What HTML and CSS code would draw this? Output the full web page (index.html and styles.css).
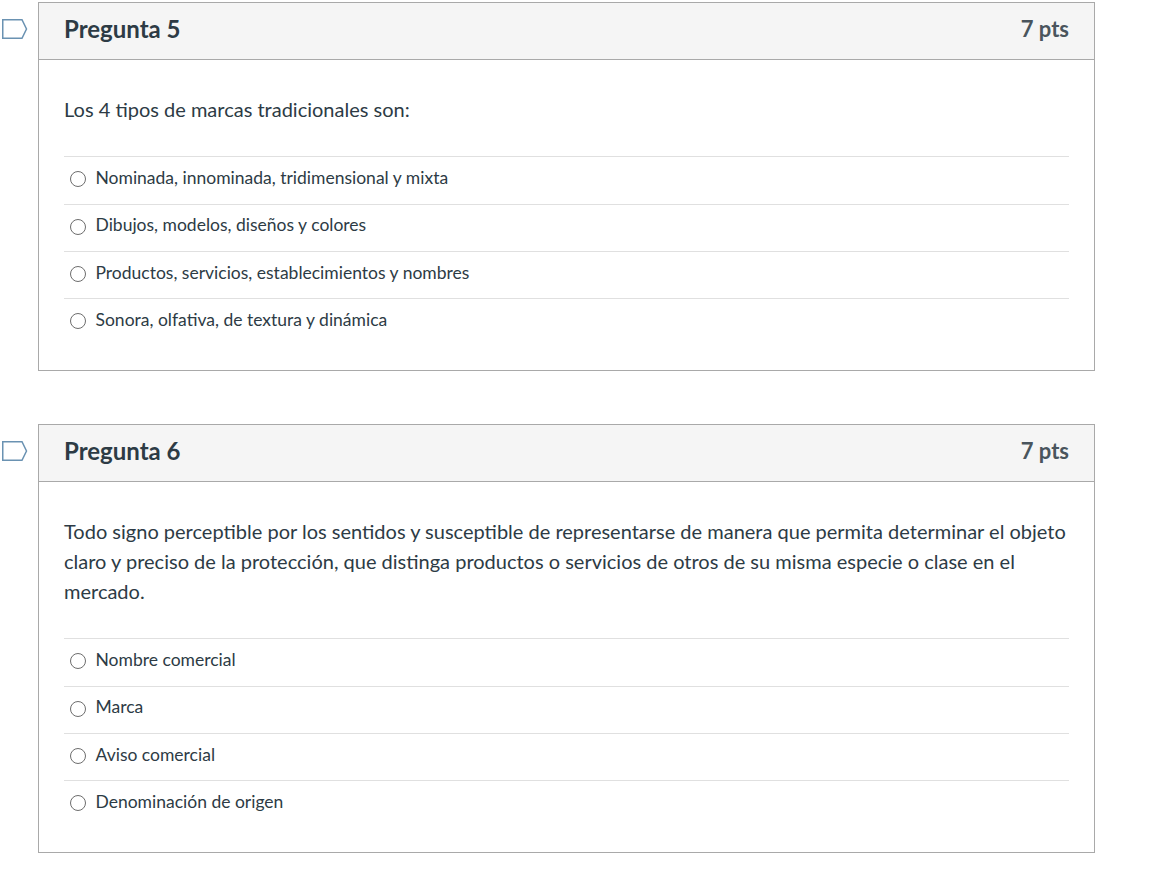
FILE: index.html
```html
<!DOCTYPE html>
<html lang="es">
<head>
<meta charset="utf-8">
<title>Preguntas</title>
<link rel="stylesheet" href="styles.css">
</head>
<body>
<main class="quiz">
  <section class="question">
    <svg class="flag" width="27" height="22" viewBox="0 0 27 22"><path d="M1.75 1.75H21L25.5 11L21 20.25H1.75Z" fill="#fff" stroke="#6a92b2" stroke-width="1.5"/></svg>
    <div class="card">
      <header class="head"><h2 class="title">Pregunta 5</h2><span class="pts">7 pts</span></header>
      <div class="body">
        <p class="text">Los 4 tipos de marcas tradicionales son:</p>
        <ul class="answers">
          <li class="answer"><span class="radio"></span><span class="label">Nominada, innominada, tridimensional y mixta</span></li>
          <li class="answer"><span class="radio"></span><span class="label">Dibujos, modelos, diseños y colores</span></li>
          <li class="answer"><span class="radio"></span><span class="label">Productos, servicios, establecimientos y nombres</span></li>
          <li class="answer"><span class="radio"></span><span class="label">Sonora, olfativa, de textura y dinámica</span></li>
        </ul>
      </div>
    </div>
  </section>
  <section class="question">
    <svg class="flag" width="27" height="22" viewBox="0 0 27 22"><path d="M1.75 1.75H21L25.5 11L21 20.25H1.75Z" fill="#fff" stroke="#6a92b2" stroke-width="1.5"/></svg>
    <div class="card">
      <header class="head"><h2 class="title">Pregunta 6</h2><span class="pts">7 pts</span></header>
      <div class="body">
        <p class="text">Todo signo perceptible por los sentidos y susceptible de representarse de manera que permita determinar el objeto claro y preciso de la protección, que distinga productos o servicios de otros de su misma especie o clase en el mercado.</p>
        <ul class="answers">
          <li class="answer"><span class="radio"></span><span class="label">Nombre comercial</span></li>
          <li class="answer"><span class="radio"></span><span class="label">Marca</span></li>
          <li class="answer"><span class="radio"></span><span class="label">Aviso comercial</span></li>
          <li class="answer"><span class="radio"></span><span class="label">Denominación de origen</span></li>
        </ul>
      </div>
    </div>
  </section>
</main>
</body>
</html>
```
FILE: styles.css
```css
* { box-sizing: border-box; }
html, body { margin: 0; background: #fff; }
body { font-family: Lato, "Liberation Sans", sans-serif; color: #2d3b45; font-variant-ligatures: common-ligatures; text-rendering: optimizeLegibility; }
.quiz { display: flex; flex-direction: column; gap: 52.72px; padding: 2px 60px 0 38px; }
.question { position: relative; }
.flag { position: absolute; left: -37px; top: 16px; }
.card { border: 1px solid #a9a9a9; }
.head { display: flex; justify-content: space-between; align-items: center; height: 57px; padding: 0 25px 4px; background: #f5f5f5; border-bottom: 1px solid #a9a9a9; }
.title { margin: 0 0 2px; font-size: 24px; font-weight: 700; }
.pts { margin-bottom: 2px; font-size: 22px; font-weight: 700; color: #4a555d; }
.body { padding: 34px 25px 24.7px; }
.text { margin: 0 0 32.3px; font-size: 20px; line-height: 30px; }
.answers { list-style: none; margin: 0; padding: 0; }
.answer { display: flex; align-items: center; height: 47.33px; border-top: 1px solid #e0e0e0; font-size: 17.5px; padding-left: 6px; }
.radio { width: 16px; height: 16px; margin: -2px 9.5px 0 0; border: 1.5px solid #6d6d6d; border-radius: 50%; background: #fff; }
.label { position: relative; top: -3px; }
```
